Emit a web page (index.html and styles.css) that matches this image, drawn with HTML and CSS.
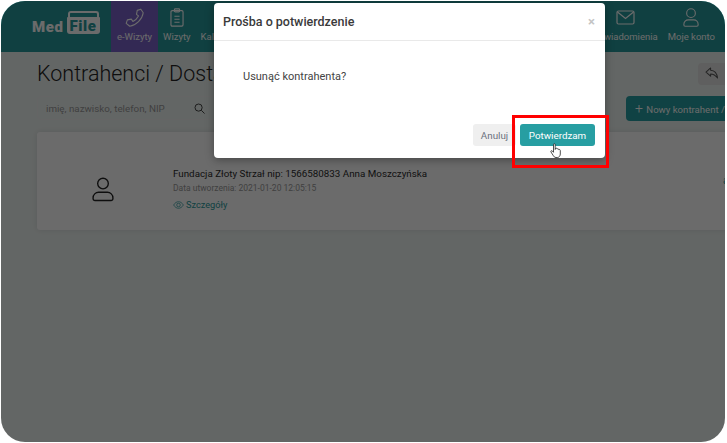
FILE: index.html
```html
<!DOCTYPE html>
<html lang="pl">
<head>
    <meta charset="UTF-8">
    <meta name="viewport" content="width=device-width, initial-scale=1.0">
    <title>Kontrahenci / Dostawcy</title>
    <link rel="stylesheet" href="styles.css">
</head>
<body>
    <div class="screen">
        <header class="topbar">
            <div class="logo">
                <span class="logo-med">Med</span>
                <span class="logo-file">File</span>
            </div>
            <nav class="nav">
                <a class="nav-item active">
                    <svg width="19" height="19" viewBox="0 0 24 24" fill="none" stroke="currentColor" stroke-width="1.400" stroke-linejoin="round"><path d="M15.500 3L20 1.500 23 6C22 14 14 22 6 23L1.500 19.500 3 15l5-1 2 3c3-1.500 5.500-4 7-7l-2.500-2z"/></svg>
                    <span>e-Wizyty</span>
                </a>
                <a class="nav-item">
                    <svg width="14" height="19" viewBox="0 0 16 22" fill="none" stroke="currentColor" stroke-width="1.300"><rect x="1" y="3" width="14" height="18" rx="1.500"/><rect x="5" y="1" width="6" height="3.500" rx="1"/><path d="M5 9.500h6M5 13h6M5 16.500h6"/></svg>
                    <span>Wizyty</span>
                </a>
                <a class="nav-item">
                    <svg width="14" height="19" viewBox="0 0 14 19"></svg>
                    <span>Kalendarz</span>
                </a>
            </nav>
            <nav class="nav nav-right">
                <a class="nav-item">
                    <svg width="19" height="19" viewBox="0 0 19 19" fill="none" stroke="currentColor" stroke-width="1.200"><rect x="1" y="3" width="17" height="13" rx="1.500"/><path d="M1.500 4l8 6.500 8-6.500"/></svg>
                    <span>Powiadomienia</span>
                </a>
                <a class="nav-item">
                    <svg width="18" height="19" viewBox="0 0 22 24" fill="none" stroke="currentColor" stroke-width="1.400"><circle cx="11" cy="6.500" r="5.500"/><path d="M3.500 23h15c1 0 1.500-.5 1.500-1.500v-1c0-3-2.500-5.500-5.500-5.500h-7C4.500 15 2 17.500 2 20.500v1c0 1 .5 1.500 1.500 1.500z"/></svg>
                    <span>Moje konto</span>
                </a>
            </nav>
        </header>

        <main class="page">
            <div class="page-head">
                <h1 class="page-title">Kontrahenci / Dostawcy</h1>
                <button class="back-btn">
                    <svg width="14" height="12" viewBox="0 0 15 13" fill="none" stroke="currentColor" stroke-width="1.100" stroke-linejoin="round"><path d="M6 1L1 5.500 6 10V7.500c3 0 5 1 7.500 4.500C13 7.500 10.500 3.800 6 3.500z"/></svg>
                </button>
            </div>
            <div class="toolbar">
                <div class="search">
                    <span class="search-text">imię, nazwisko, telefon, NIP</span>
                    <svg width="11" height="11" viewBox="0 0 12 12" fill="none" stroke="currentColor" stroke-width=".9"><circle cx="5" cy="5" r="3.900"/><path d="M8 8l3.500 3.500"/></svg>
                </div>
                <button class="new-btn"><span class="plus">+</span> Nowy kontrahent / dostawca</button>
            </div>
            <section class="card">
                <div class="card-icon">
                    <svg width="22" height="25" viewBox="0 0 24 27" fill="none" stroke="currentColor" stroke-width="1.500"><circle cx="12" cy="7" r="5.800"/><path d="M3 25.500h18c1 0 1.800-.6 1.800-1.600v-1.400c0-3.300-2.700-6-6-6H7.200c-3.300 0-6 2.700-6 6v1.400c0 1 .8 1.600 1.800 1.600z"/></svg>
                </div>
                <div class="card-body">
                    <div class="card-name">Fundacja Złoty Strzał nip: 1566580833 Anna Moszczyńska</div>
                    <div class="card-date">Data utworzenia: 2021-01-20 12:05:15</div>
                    <a class="card-link">
                        <svg width="11" height="8" viewBox="0 0 12 9" fill="none" stroke="currentColor" stroke-width=".8"><path d="M.5 4.500C2 2 4 .8 6 .8s4 1.200 5.500 3.700C10 7 8 8.200 6 8.200S2 7 .5 4.500z"/><circle cx="6" cy="4.500" r="2"/></svg>
                        Szczegóły
                    </a>
                </div>
                <a class="card-action">akcje</a>
            </section>
        </main>

        <div class="backdrop"></div>

        <div class="modal">
            <div class="modal-head">
                <h2 class="modal-title">Prośba o potwierdzenie</h2>
                <span class="modal-close">×</span>
            </div>
            <div class="modal-body">Usunąć kontrahenta?</div>
            <div class="modal-foot">
                <button class="btn btn-cancel">Anuluj</button>
                <button class="btn btn-confirm">Potwierdzam</button>
            </div>
        </div>

        <div class="highlight"></div>

        <svg class="cursor" width="12" height="16" viewBox="0 0 12 16"><path d="M3.500 1.500c0-1 1.700-1 1.700 0v5l.3-1c.8-.5 1.500-.3 1.600.5.700-.5 1.500-.3 1.600.6.700-.4 1.600 0 1.600 1v3.400c0 1.800-1.200 3.500-3 3.500H6c-1.500 0-2.200-1-3-2.300L1 9c-.6-1 .6-1.800 1.400-1l1.100 1.300z" fill="#fff" stroke="#222" stroke-width=".8" stroke-linejoin="round"/></svg>
    </div>
</body>
</html>
```

FILE: styles.css
```css
* {
    box-sizing: border-box;
}
body {
    margin: 0;
    background: #fff;
    font-family: Roboto, "Liberation Sans", sans-serif;
    overflow: hidden;
}
.screen {
    position: relative;
    width: 724px;
    height: 441px;
    margin: 1px 2px 1px 1px;
    border-radius: 24px;
    overflow: hidden;
    background: #edf3f1;
}

/* --- Top bar --- */
.topbar {
    display: flex;
    height: 51px;
    background: #279a9c;
    color: #fff;
}
.logo {
    display: flex;
    align-items: flex-end;
    gap: 3px;
    width: 110px;
    padding: 0 0 18px 31px;
    font-size: 15px;
    font-weight: 900;
    letter-spacing: .6px;
    line-height: 14px;
}
.logo-med {
    color: #fff;
}
.logo-file {
    position: relative;
    padding: 2px 3px 1px;
    border-radius: 1px 1px 3px 3px;
    background: #fff;
    color: #279a9c;
}
/* zakladka teczki nad napisem File */
.logo-file::before {
    content: "";
    position: absolute;
    left: 1px;
    right: 1px;
    top: -6px;
    height: 5px;
    border: 2px solid #fff;
    border-bottom: 0;
    border-radius: 3px 3px 0 0;
}
.nav {
    display: flex;
}
.nav-right {
    margin-left: auto;
    padding-right: 5px;
}
.nav-item {
    display: flex;
    flex-direction: column;
    align-items: center;
    justify-content: flex-end;
    gap: 4px;
    padding: 0 5px 10px;
    font-size: 9.500px;
    white-space: nowrap;
}
.nav-item.active {
    width: 47px;
    background: #7b62c9;
    padding: 0 0 10px;
}

/* --- Page --- */
.page {
    padding: 7px 0 0 36px;
}
.page-head {
    display: flex;
    justify-content: space-between;
    align-items: center;
}
.page-title {
    margin: 0;
    font-size: 21.500px;
    font-weight: 300;
    line-height: 30px;
    color: #222;
}
.back-btn {
    width: 40px;
    height: 22px;
    margin-right: -13px;
    padding: 0 0 0 7px;
    border: 0;
    border-radius: 4px 0 0 4px;
    background: #e2e2e2;
    color: #555;
    text-align: left;
}
.toolbar {
    display: flex;
    justify-content: space-between;
    margin: 7px -81px 0 0;
}
.search {
    display: flex;
    justify-content: space-between;
    align-items: center;
    width: 180px;
    height: 24px;
    padding: 0 11px 0 8px;
    border: 1px solid #f0f0f0;
    border-radius: 4px;
    color: #222;
}
.search-text {
    font-size: 9.800px;
    color: #999;
}
.new-btn {
    width: 180px;
    height: 25px;
    padding: 0 9px;
    border: 0;
    border-radius: 4px;
    background: #279ea2;
    color: #fff;
    font-family: inherit;
    font-size: 9.600px;
    text-align: left;
    white-space: nowrap;
}
.plus {
    margin-right: 1px;
    font-size: 14px;
    font-weight: 300;
    line-height: 10px;
}
.card {
    display: flex;
    align-items: center;
    height: 98px;
    margin: 11px -10px 0 0;
    padding-top: 16px;
    border-radius: 3px;
    background: #fff;
    box-shadow: 0 0 6px rgba(0, 0, 0, .1);
}
.card-icon {
    display: flex;
    justify-content: center;
    width: 132px;
    margin-right: 4px;
    color: #222;
}
.card-body {
    flex: 1;
}
.card-name {
    font-size: 9.800px;
    color: #2c2c2c;
}
.card-date {
    margin-top: 4px;
    font-size: 8.500px;
    color: #999;
}
.card-link {
    display: flex;
    align-items: center;
    gap: 2px;
    margin-top: 6px;
    font-size: 9.200px;
    color: #279a9c;
}
.card-action {
    width: 12px;
    margin-bottom: 18px;
    font-size: 10px;
    overflow: hidden;
    color: #279a9c;
}

/* --- Dialog --- */
.backdrop {
    position: absolute;
    inset: 0;
    background: rgba(0, 0, 0, .58);
}
.modal {
    position: absolute;
    left: 213px;
    top: 2px;
    width: 391px;
    height: 155px;
    border-radius: 4px;
    background: #fff;
    box-shadow: 0 2px 8px rgba(0, 0, 0, .35);
}
.modal-head {
    display: flex;
    justify-content: space-between;
    align-items: center;
    height: 38px;
    padding: 0 10px 0 9px;
    border-bottom: 1px solid #e9e9e9;
}
.modal-title {
    margin: 0;
    font-size: 12.500px;
    font-weight: 500;
    color: #3a3a3a;
}
.modal-close {
    font-size: 13px;
    font-weight: 700;
    color: #c4c4c4;
}
.modal-body {
    padding: 29px 29px 0;
    height: 83px;
    font-size: 11px;
    color: #444;
}
.modal-foot {
    display: flex;
    justify-content: flex-end;
    gap: 4px;
    padding-right: 10px;
}
.btn {
    height: 22px;
    border: 0;
    border-radius: 3px;
    font-family: inherit;
    font-size: 9.800px;
}
.btn-cancel {
    width: 43px;
    background: #efefef;
    color: #6b7280;
}
.btn-confirm {
    width: 75px;
    background: #279ea2;
    color: #fff;
}
.highlight {
    position: absolute;
    left: 511px;
    top: 114px;
    width: 97px;
    height: 53px;
    border: 3px solid #f00;
}
.cursor {
    position: absolute;
    left: 549px;
    top: 142px;
}
```
